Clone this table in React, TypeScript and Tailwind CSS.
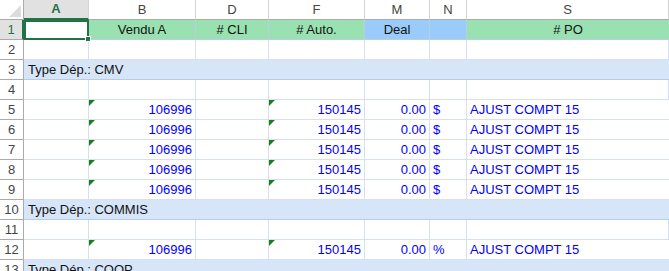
import React from 'react';

const cols = ['A', 'B', 'D', 'F', 'M', 'N', 'S'];

function Tri() {
  return <span className="absolute left-0 top-0 w-0 h-0 border-t-[6px] border-t-[#1a7f1a] border-r-[6px] border-r-transparent" />;
}

function Num({ n }: { n: number }) {
  return (
    <div className={`flex items-center justify-center border-r border-b border-[#ababab] text-[#444] ${n === 1 ? 'bg-[#e1e1e1] text-[#217346] border-r-[#217346] border-r-2' : 'bg-white'}`}>
      {n}
    </div>
  );
}

function Empty({ n }: { n: number }) {
  return (
    <>
      <Num n={n} />
      {cols.map((c) => (
        <div key={c} className="border-r border-b border-[#d6e0f0]" />
      ))}
    </>
  );
}

function Group({ n, label }: { n: number; label: string }) {
  return (
    <>
      <Num n={n} />
      <div className="col-span-7 flex items-center pl-1 bg-[#d6e5f8] border-b border-[#b9cbe6] text-[#111]">{label}</div>
    </>
  );
}

function Data({ n, unit }: { n: number; unit: string }) {
  return (
    <>
      <Num n={n} />
      <div className="border-r border-b border-[#d6e0f0]" />
      <div className="relative flex items-center justify-end pr-[3px] border-r border-b border-[#d6e0f0] text-[#0000ff]">
        <Tri />
        106996
      </div>
      <div className="border-r border-b border-[#d6e0f0]" />
      <div className="relative flex items-center justify-end pr-[3px] border-r border-b border-[#d6e0f0] text-[#0000ff]">
        <Tri />
        150145
      </div>
      <div className="flex items-center justify-end pr-[3px] border-r border-b border-[#d6e0f0] text-[#0000ff]">0.00</div>
      <div className="flex items-center pl-[3px] border-r border-b border-[#d6e0f0] text-[#0000ff]">{unit}</div>
      <div className="flex items-center pl-[3px] border-b border-[#d6e0f0] text-[#0000ff]">AJUST COMPT 15</div>
    </>
  );
}

export default function App() {
  return (
    <div className="w-[669px] h-[271px] overflow-hidden bg-white text-[13px] font-['Liberation_Sans',Arial,sans-serif]">
      <div className="grid grid-cols-[24px_65px_107px_73px_96px_65px_37px_1fr] auto-rows-[20px]">
        {/* column headers */}
        <div className="relative bg-white border-r border-b border-[#ababab]">
          <span className="absolute right-[2px] bottom-[2px] w-0 h-0 border-l-[12px] border-l-transparent border-b-[12px] border-b-[#dcdcdc]" />
        </div>
        {cols.map((c) => (
          <div
            key={c}
            className={`flex items-center justify-center border-r border-[#d4d4d4] ${c === 'A' ? 'bg-[#e1e1e1] text-[#217346] font-bold border-b-2 border-b-[#217346]' : 'bg-white text-[#444] border-b border-b-[#ababab]'}`}
          >
            {c}
          </div>
        ))}

        {/* row 1 */}
        <Num n={1} />
        <div className="relative border-2 border-[#217346] bg-white">
          <span className="absolute -right-[4px] -bottom-[4px] w-[6px] h-[6px] bg-[#217346] border border-white" />
        </div>
        <div className="flex items-center justify-center bg-[#99e1b0] border-r border-b border-[#b8cfe0] text-[#111]">Vendu A</div>
        <div className="flex items-center justify-center bg-[#99e1b0] border-r border-b border-[#b8cfe0] text-[#111]">#&nbsp;CLI</div>
        <div className="flex items-center justify-center bg-[#99e1b0] border-r border-b border-[#b8cfe0] text-[#111]"># Auto.</div>
        <div className="flex items-center justify-center bg-[#99ccfa] border-r border-b border-[#b8cfe0] text-[#111]">Deal</div>
        <div className="bg-[#99ccfa] border-r border-b border-[#b8cfe0]" />
        <div className="flex items-center justify-center bg-[#99e1b0] border-b border-[#b8cfe0] text-[#111]">#&nbsp;PO</div>

        <Empty n={2} />
        <Group n={3} label="Type Dép.: CMV" />
        <Empty n={4} />
        <Data n={5} unit="$" />
        <Data n={6} unit="$" />
        <Data n={7} unit="$" />
        <Data n={8} unit="$" />
        <Data n={9} unit="$" />
        <Group n={10} label="Type Dép.: COMMIS" />
        <Empty n={11} />
        <Data n={12} unit="%" />
        <Group n={13} label="Type Dép.: COOP" />
      </div>
    </div>
  );
}
